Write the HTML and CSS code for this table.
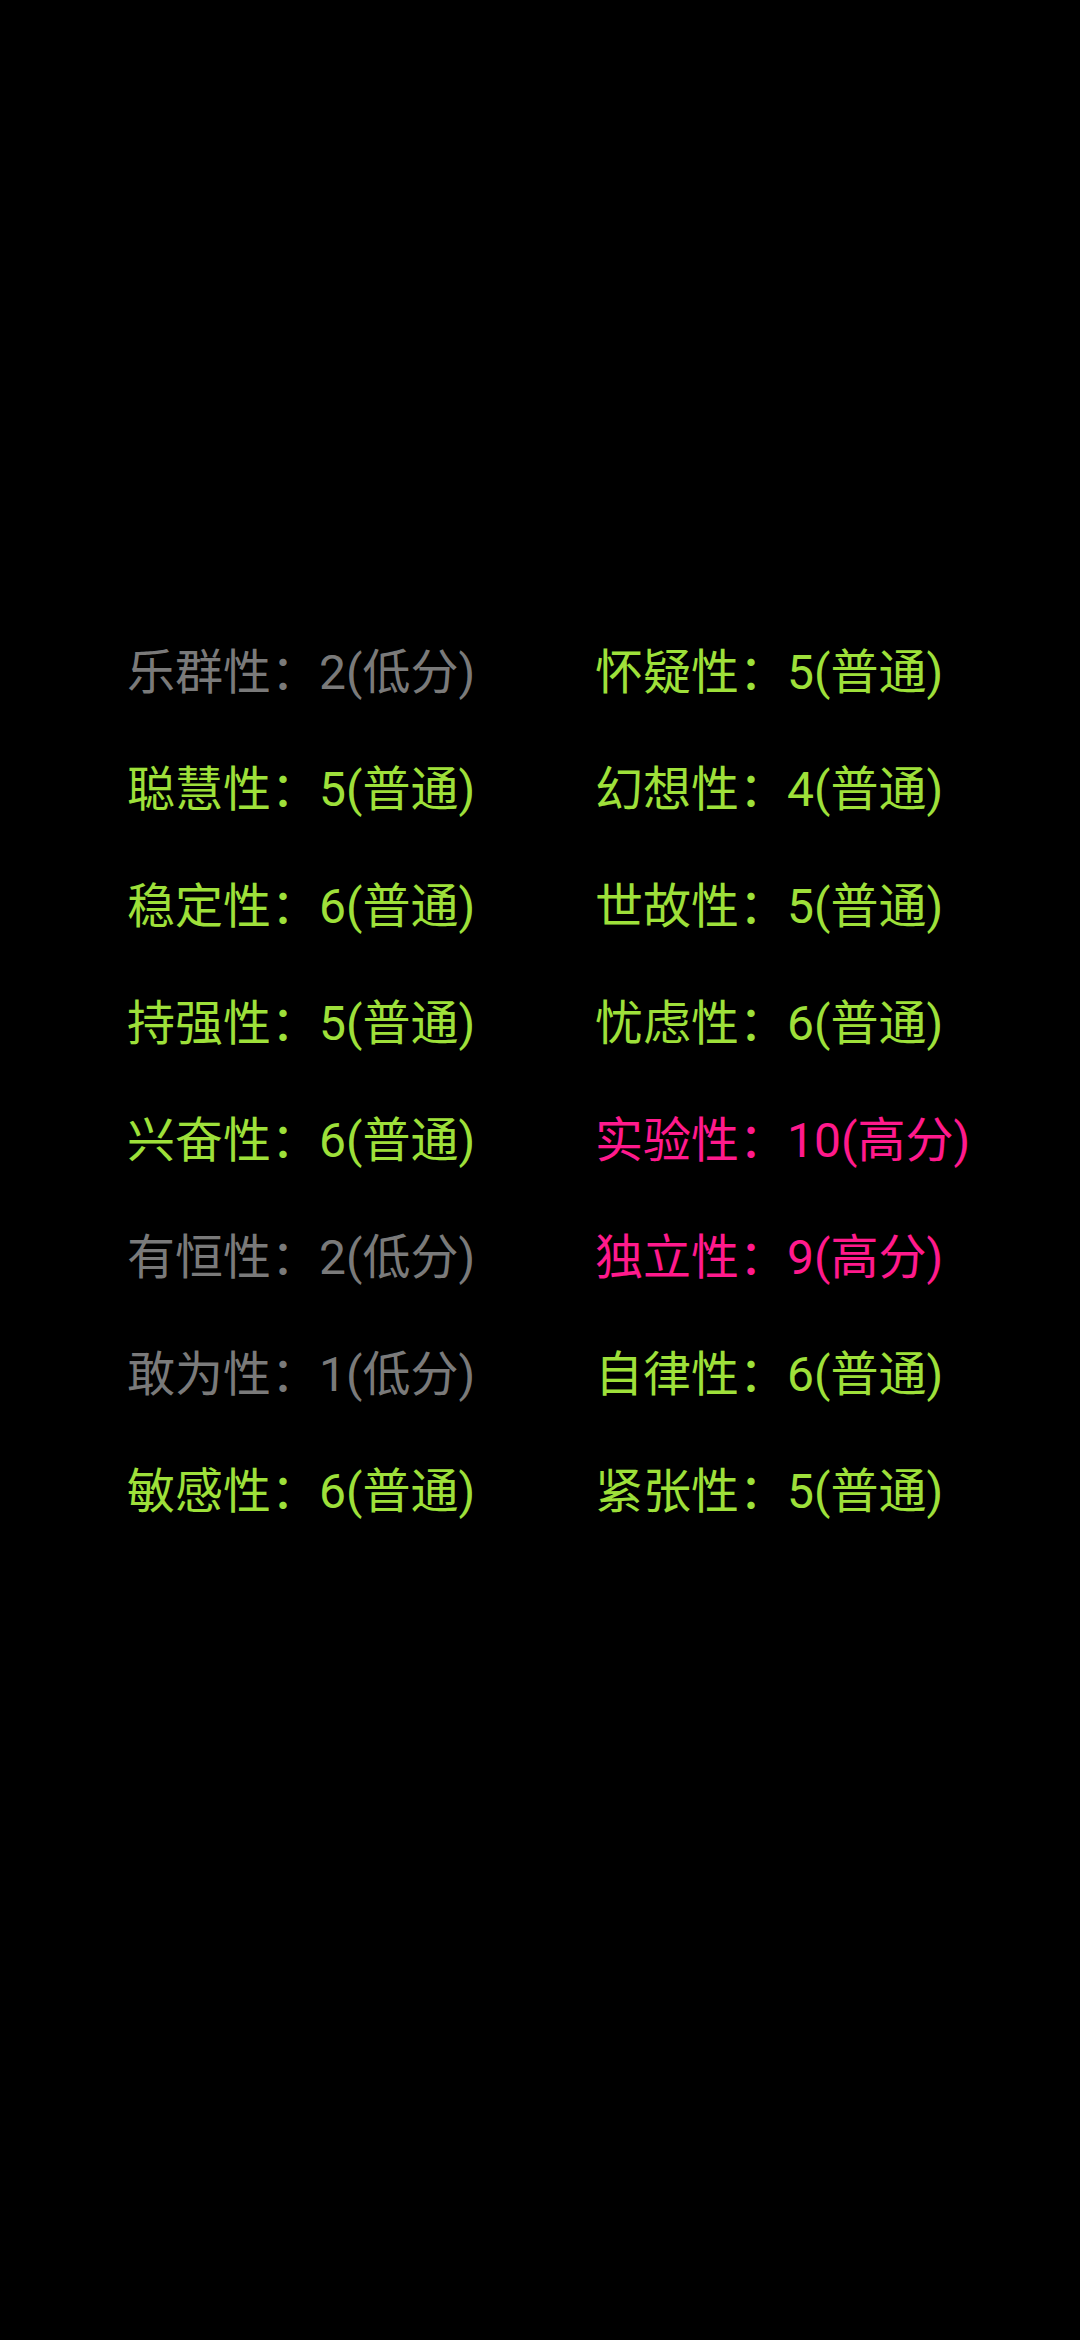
FILE: index.html
```html
<!DOCTYPE html>
<html lang="zh-CN">
<head>
<meta charset="utf-8">
<link rel="stylesheet" href="styles.css">
</head>
<body>
<div class="grid">
  <div class="item low">乐群性：2(低分)</div>
  <div class="item mid">怀疑性：5(普通)</div>
  <div class="item mid">聪慧性：5(普通)</div>
  <div class="item mid">幻想性：4(普通)</div>
  <div class="item mid">稳定性：6(普通)</div>
  <div class="item mid">世故性：5(普通)</div>
  <div class="item mid">持强性：5(普通)</div>
  <div class="item mid">忧虑性：6(普通)</div>
  <div class="item mid">兴奋性：6(普通)</div>
  <div class="item high">实验性：10(高分)</div>
  <div class="item low">有恒性：2(低分)</div>
  <div class="item high">独立性：9(高分)</div>
  <div class="item low">敢为性：1(低分)</div>
  <div class="item mid">自律性：6(普通)</div>
  <div class="item mid">敏感性：6(普通)</div>
  <div class="item mid">紧张性：5(普通)</div>
</div>
</body>
</html>
```
FILE: styles.css
```css
html, body {
  margin: 0;
  padding: 0;
  background: #000;
  width: 1080px;
  height: 2340px;
}
.grid {
  padding-top: 614px;
  padding-left: 127px;
  display: grid;
  grid-template-columns: 468px 1fr;
  grid-auto-rows: 117px;
}
.item {
  font-family: Roboto, "Noto Sans CJK SC", sans-serif;
  font-size: 48px;
  line-height: 117px;
  white-space: nowrap;
}
.low { color: #7a7a7a; }
.mid { color: #9ee03a; }
.high { color: #ff1a8c; }
```
